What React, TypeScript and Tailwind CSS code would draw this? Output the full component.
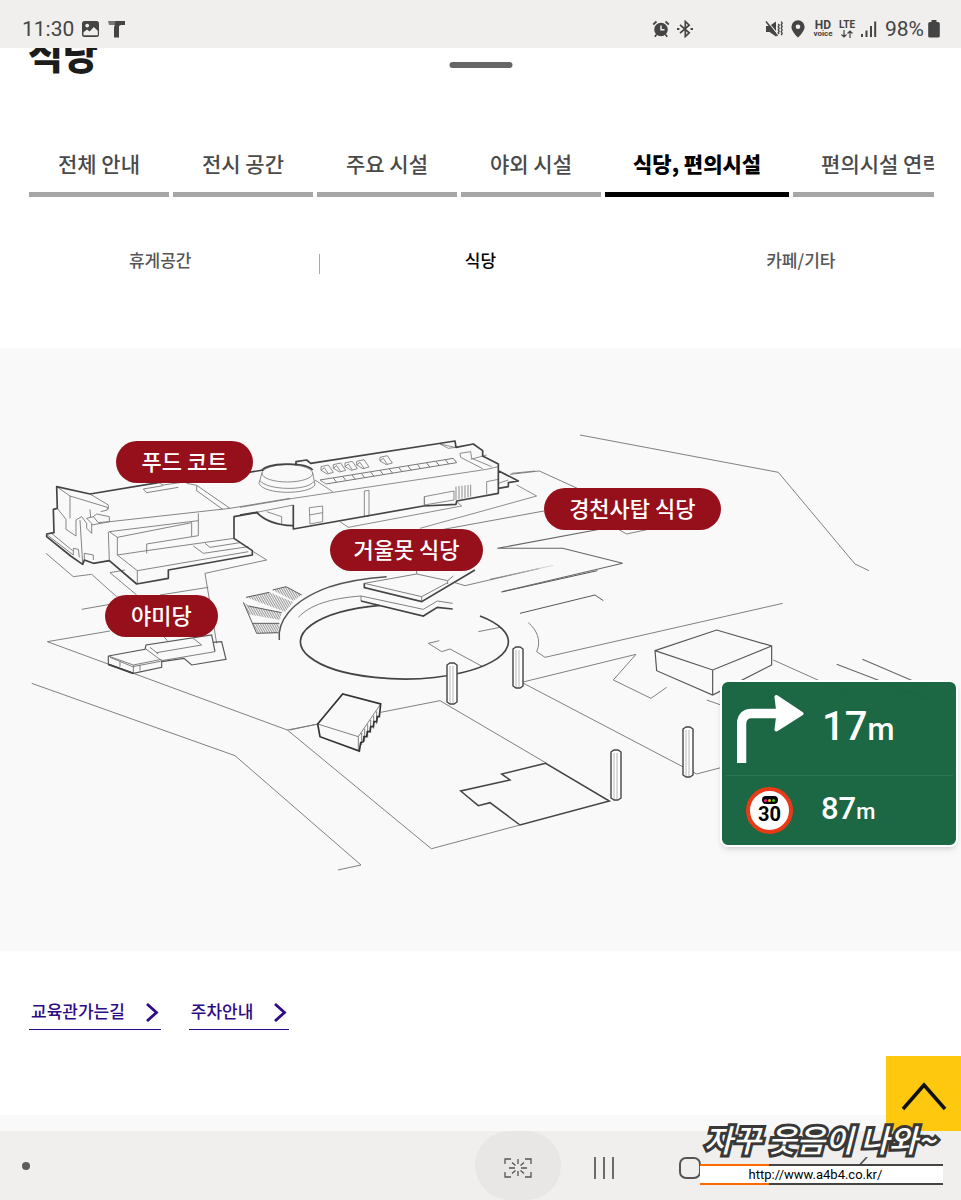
import React, { useState } from "react";
import clsx from "clsx";

const tabs = ["전체 안내", "전시 공간", "주요 시설", "야외 시설", "식당, 편의시설", "편의시설 연락처"];
const subTabs = ["휴게공간", "식당", "카페/기타"];

const places = [
  { name: "푸드 코트", spot: "left-[12.1%] top-[15.4%] w-[14.2%]" },
  { name: "경천사탑 식당", spot: "left-[56.6%] top-[23.2%] w-[18.4%]" },
  { name: "거울못 식당", spot: "left-[34.3%] top-[30%] w-[16%]" },
  { name: "야미당", spot: "left-[10.9%] top-[40.9%] w-[11.8%]" },
];

const skylights = [
  [243, 140],
  [280, 134],
  [315, 129],
  [350, 124],
  [420, 112],
];

const StatusBar = () => (
  <header className="flex h-12 items-center justify-between bg-[#f0efed] pl-[22px] pr-[21px] pt-[10px] text-[#444] font-[Roboto,sans-serif]">
    <div className="flex items-center">
      <span className="text-[21px] leading-6">11:30</span>
      <svg className="ml-2 size-[18px]" viewBox="0 0 18 18" aria-hidden="true">
        <rect x="0" y="1" width="17" height="16" rx="2.5" fill="#444" />
        <circle cx="5.200" cy="5.600" r="1.900" fill="#f0efed" />
        <path d="M1.500 15.200v-3l3.500-2.600 2.600 2 4.200-4.600 4 3.800v4.400z" fill="#f0efed" />
      </svg>
      <svg className="ml-2 h-[18px] w-[18px]" viewBox="0 0 18 18" aria-hidden="true">
        <path d="M0 1h17v4h-3.500c-1.700 0-2.500 .8-2.500 2.300V17.500H6V7.800c0-1.100 .3-2 1-2.800H1z" fill="#444" />
        <path d="M0 1h7.500l-1 4H0z" fill="#f0efed" opacity=".3" />
      </svg>
    </div>
    <div className="flex items-center">
      <svg className="size-[18px]" viewBox="0 0 18 18" aria-hidden="true">
        <circle cx="9" cy="9.500" r="6.800" fill="#444" />
        <path d="M1.200 4.500 4.500 1.500M16.800 4.500 13.500 1.500M4.500 14.500 2.800 16.700M13.500 14.500l1.700 2.200" stroke="#444" strokeWidth="1.700" />
        <path d="M9 5.500v4.300h3.500" stroke="#f0efed" strokeWidth="1.500" fill="none" />
      </svg>
      <svg className="ml-[6px] size-[18px]" viewBox="0 0 18 18" fill="none" stroke="#444" strokeWidth="1.700" aria-hidden="true">
        <path d="M4 4.800l9.200 8L9.300 16.500V1.500l3.900 3.700-9.200 8" />
        <path d="M1 9h2.400M14.600 9H17" strokeWidth="2.200" />
      </svg>
      <svg className="ml-[71px] h-[18px] w-[18px]" viewBox="0 0 18 18" aria-hidden="true">
        <path d="M1 6h3.500L11 1.500v15L4.500 12H1z" fill="#444" />
        <path d="M1.800 .8 13 14.500" stroke="#f0efed" strokeWidth="1.300" />
        <path d="M1 1.500 12.500 16" stroke="#444" strokeWidth="1.500" />
        <path d="M13.200 4l1 1.300-1 1.500 1 1.500-1 1.500 1 1.500-1 1.500 1 1.200M16.200 1.500l1 1.700-1 1.700 1 1.700-1 1.700 1 1.700-1 1.700 1 1.700-1 1.700" stroke="#444" strokeWidth="1.300" fill="none" />
      </svg>
      <svg className="ml-2 h-[18px] w-[14px]" viewBox="0 0 14 18" aria-hidden="true">
        <path d="M7 .3a6.600 6.600 0 0 0-6.600 6.600C.4 11.200 7 17.500 7 17.500s6.600-6.300 6.600-10.600A6.600 6.600 0 0 0 7 .3z" fill="#444" />
        <circle cx="7" cy="6.800" r="2.300" fill="#f0efed" />
      </svg>
      <span className="ml-2 flex w-5 flex-col items-center font-bold">
        <span className="text-[12px] leading-[10px]">HD</span>
        <span className="text-[8px] leading-[8px]">voice</span>
      </span>
      <span className="ml-1 flex w-5 flex-col items-center">
        <span className="text-[10px] font-bold leading-[10px]">LTE</span>
        <svg className="h-2 w-3" viewBox="0 0 12 8" fill="none" stroke="#444" strokeWidth="1.200" aria-hidden="true">
          <path d="M3 0v7M.5 4.500 3 7l2.500-2.500M9 8V1M6.500 3.500 9 1l2.500 2.500" />
        </svg>
      </span>
      <svg className="ml-1 h-[18px] w-4" viewBox="0 0 16 18" fill="#444" aria-hidden="true">
        <path d="M0 14h2v3H0zM4.500 10.500h2V17h-2zM9 6h2v11H9zM13.200 1.500h2V17h-2z" />
      </svg>
      <span className="ml-2 text-[21px] leading-6">98%</span>
      <svg className="ml-1 h-[18px] w-3" viewBox="0 0 12 18" fill="#444" aria-hidden="true">
        <path d="M3.500 0h5v2H10a1.800 1.800 0 0 1 1.800 1.800v11.700A1.800 1.800 0 0 1 10 17.500H2A1.800 1.800 0 0 1 .2 15.500V3.800A1.800 1.800 0 0 1 2 2h1.500z" />
      </svg>
    </div>
  </header>
);

const Pillar = ({ x, y, height }: { x: number; y: number; height: number }) => (
  <g>
    <path d={`M${x} ${y + 2}l3-2h4l3 2v${height - 3}l-3 2h-4l-3-2z`} strokeWidth="1.400" fill="#fff" />
    <path d={`M${x + 6} ${y + 3}v${height - 3}M${x + 3} ${y + 3}v${height - 3}`} stroke="#999" strokeWidth=".7" />
  </g>
);

const MuseumMap = () => (
  <svg className="block w-full" viewBox="0 348 961 603" fill="none" stroke="#666" strokeWidth="1" role="img" aria-label="박물관 지도">
    <defs>
      <pattern id="hatch" width="2" height="8" patternUnits="userSpaceOnUse" patternTransform="scale(3) rotate(-30)">
        <path d="M0 0v8" stroke="#555" strokeWidth="1.200" />
      </pattern>
      <linearGradient id="fade" x1="0" x2="1">
        <stop offset="0" stopColor="#777" />
        <stop offset="1" stopColor="#ddd" />
      </linearGradient>
    </defs>

    {/* main hall, west wing */}
    <g transform="translate(30 420) scale(.33333)" strokeWidth="2.700" stroke="#777">
      <path d="M80 200 120 228V295M120 228 232 262V270L212 275M180 222 235 255V268M180 268 182 292M82 265 108 298V328L138 348V300L155 290 170 310V325L185 340V310L170 295 190 290M190 290 200 282 238 290V305L205 308zM150 300 158 430M185 315 240 305" />
      <path d="M52 345 130 405M62 338 128 392M130 405V385L145 388 148 412M163 420V400L190 405V420" />
      <path d="M240 305 600 265 780 235M340 207 350 218 445 202M340 207 400 197M470 190 500 196 600 265M500 196V212L578 268M385 188 400 195 470 185" />
      <path d="M238 335 505 302M238 335 262 352 485 308V350M262 352V405L350 392M262 405 322 452 655 395M322 452V490M235 335 238 422M350 372V400M350 372 505 347V280M350 392 612 355M490 378 520 400 655 380M525 370 540 382 630 368" />
      <path d="M48 400 130 470 185 463 260 530M320 525 240 458 285 450M390 525 535 502M710 420 525 460 560 670M670 395 710 420" />
      <path d="M685 277 612 290V355L667 392V405L415 450V475L320 492 238 422 190 430 163 420 158 433 122 408 50 350V342L72 338 70 268 82 265 80 200 180 222 385 188M620 163 700 150" stroke="#444" strokeWidth="5" strokeLinejoin="round" />
    </g>

    {/* main hall, east wing and the round hall */}
    <g transform="translate(240 420) scale(.33333)" strokeWidth="2.500" stroke="#777">
      <path d="M0 262 160 235 740 148 775 140M160 255V320M50 277 160 255M80 275 125 290V312M208 263 248 258V305L210 312zM208 285 248 278M373 213 387 211V288L373 290zM225 180 278 215M240 180 258 192" />
      <path d="M240 180 640 115 650 128 258 192M280 174 290 187M308 169 318 182M336 165 346 178M364 160 374 173M392 156 402 169M420 151 430 164M448 147 458 160M476 142 486 155M504 138 514 151M532 133 542 146M560 129 570 142M588 124 598 137M616 119 626 132" strokeWidth="3" />
      {skylights.map(([x, y]) => (
        <path key={x} d={`M${x} ${y}l22-5 15 22-18 5-19-11zM${x} ${y + 11}l10-8 12 18`} />
      ))}
      <path d="M600 72 645 82M600 72 625 85 648 82M660 100 692 95 695 115 755 140M660 100 662 112 728 146M692 118 740 105M553 230 642 213V240L553 255zM553 230V255M648 200V240M657 198V238M666 197V236M675 196V234M684 195V232M692 194V230M740 223V185L775 178" />
      <path d="M775 190 805 180M815 160 885 153M830 195 890 228 540 325M300 305 325 322 665 258 650 245" />
      <path d="M66 158 57 190C70 225 205 225 225 195L218 158M60 182C80 210 200 215 222 184" />
      <ellipse cx="142" cy="160" rx="76" ry="26" />
      <path d="M65 152C80 128 195 124 218 150M168 137V125L200 120 212 130 645 63 648 82 700 72 728 92V108L775 132V220L650 243 648 253 550 258 160 327V255M0 285 50 277Q85 314 158 317M775 152 835 183 805 188V200L775 205" stroke="#444" strokeWidth="5" strokeLinejoin="round" />
    </g>

    {/* garden steps, south-west buildings and roads */}
    <g transform="translate(30 570) scale(.33333)" strokeWidth="2.800" stroke="#777">
      <path d="M155 118 240 103M240 183 52 215 772 480 1205 837M772 480 860 463M5 340 615 557 993 885 924 900" />
      <path d="M728 60 768 50 815 75 790 92zM648 82 718 67 790 97 765 125zM640 97 660 108 755 128 750 150 655 133zM668 160H748L745 190H680z" fill="url(#hatch)" stroke="none" />
      <path d="M728 60 768 50 815 75M648 82 718 67M640 97 680 190 745 188M668 160H748M655 108 755 128" stroke="#555" />
      <path d="M235 258 310 285 395 268M310 285V310M330 284V302M270 275V290M240 262 308 290 392 274M380 248 515 225 490 205M345 235 395 272M360 232 385 252M395 272 555 245M400 198 412 212" />
      <path d="M235 258V283L310 310 395 292V272M235 258 345 238 348 225 545 195 555 245M548 217 575 215 588 268 485 285 462 265 395 275" stroke="#555" strokeWidth="3.500" />
      <path d="M235 283 310 310" stroke="#444" strokeWidth="6" />
    </g>

    {/* mirror pond, pavilion and kiosk */}
    <g transform="translate(290 570) scale(.33333)" strokeWidth="2.800" stroke="#777">
      <path d="M25 142C60 105 120 85 213 78M213 93V78L400 118 442 93 488 100M565 185 630 172M448 212 415 220 455 245 480 237 578 290" />
      <path d="M223 40 395 80 473 38M223 40 380 12M395 80V93M380 0V12L473 32 490 18M473 32V42M495 38 525 47 750 -5" />
      <path d="M635 66 922 2M690 130 915 75 940 92" stroke="#555" strokeWidth="3" />
      <path d="M715 158C740 180 755 210 740 245L765 262 1478 100M695 337 1038 253 970 330 1083 385 1130 352M695 337 1220 612 1300 591M0 480 83 462M272 427 450 392 770 580" />
      <path d="M-32 210C-38 160-5 95 120 50C175 32 235 24 290 20" stroke="#555" strokeWidth="4.500" />
      <path d="M270 106A312 112 0 1 0 570 138M213 93 400 138 442 112 488 117M223 40V53L395 95 555 0" stroke="#444" strokeWidth="5" />
      <path d="M83 462 205 500 272 402M205 500V540M215 488V525M224 476V514M233 463V502M242 450V488M251 437V476M260 424V462" />
      <path d="M83 462 158 372 272 402 268 440 262 440 260 455 252 455 250 470 242 470 240 485 232 485 230 500 222 500 220 515 212 518 208 543 90 500z" stroke="#333" strokeWidth="5" />
    </g>

    {/* open theatre, lower right */}
    <g transform="translate(400 700) scale(.33333)" stroke="#444" strokeWidth="4.500">
      <path d="M437 190 305 222 330 240 182 273 235 317 270 308 360 375 628 303z" />
      <path d="M95 446 360 375M920 0 960 14" stroke="#777" strokeWidth="2.800" />
    </g>

    {/* eastern grounds */}
    <g transform="translate(490 420) scale(.33333)" strokeWidth="2.800">
      <path d="M270 45 865 157 1095 432 1137 452M60 163 148 153 262 205M-150 330 162 273M385 328 410 342 475 328M850 720 1072 820" stroke="#777" />
      <path d="M345 325 22 385H218L398 430 35 515M1040 733 1320 840M1117 718 1310 800" strokeWidth="3.200" />
      <path d="M0 478 190 436" stroke="url(#fade)" />
      <path d="M495 692 680 630 845 678V735L668 825 500 752zL668 750 845 678M668 750V825" stroke="#555" strokeWidth="3.500" />
    </g>

    <g stroke="#444">
      <Pillar x={447} y={663} height={40} />
      <Pillar x={513} y={647} height={40} />
      <Pillar x={611} y={750} height={49} />
      <Pillar x={683} y={727} height={49} />
    </g>
  </svg>
);

const DrivingPanel = () => (
  <aside className="absolute right-[3px] top-[632px] w-[238px] rounded-lg border-2 border-white bg-[#176440]/98 px-[3px] font-medium text-white shadow-md font-[Roboto,sans-serif]">
    <div className="flex h-[94px] items-center border-b border-[#2c7654] pl-3">
      <svg className="h-[70px] w-[68px]" viewBox="0 0 68 70" aria-hidden="true">
        <path d="M4.500 69V30c0-7 4-10.500 10-10.500H46" fill="none" stroke="#fff" strokeWidth="9.500" />
        <path d="M37.500 3.500c-.5-2 1.500-3.200 3.200-2L65.500 18c1.500 1 1.500 2.200 0 3.200L40.700 37c-1.700 1.200-3.700 0-3.200-2L39.500 19.500z" fill="#fff" />
      </svg>
      <p className="ml-[17px] text-[40px] leading-[56px]">
        17<span className="text-[31px]">m</span>
      </p>
    </div>
    <div className="flex h-[69px] items-center pl-[21px]">
      <div className="flex size-[47px] flex-col items-center rounded-full border-4 border-[#e73a17] bg-white pt-[5px] text-black">
        <span className="flex h-2 w-4 items-center justify-center gap-px rounded-full bg-black">
          <i className="size-[3px] rounded-full bg-[#ff1c9b]" />
          <i className="size-[3px] rounded-full bg-[#ffc400]" />
          <i className="size-[3px] rounded-full bg-[#2fd043]" />
        </span>
        <span className="text-[20px] font-bold leading-[20px]">30</span>
      </div>
      <p className="ml-[28px] text-[31px] leading-[40px]">
        87<span className="text-[22px]">m</span>
      </p>
    </div>
  </aside>
);

const MoreLink = ({ label }: { label: string }) => (
  <a href="#" className="flex h-9 items-center border-b border-[#2d0a86] px-[2px] pb-[2px] text-[17px] font-medium text-[#2d0a86]">
    {label}
    <svg className="ml-5 mt-[2px] h-5 w-[14px]" viewBox="0 0 14 20" fill="none" stroke="#2d0a86" strokeWidth="2.800" aria-hidden="true">
      <path d="M2 2l9.500 8.500L2 19" />
    </svg>
  </a>
);

const NavigationBar = () => (
  <footer className="flex h-[69px] items-center justify-between bg-[#f0efed] pl-[22px] pr-[56px] text-[#555]">
    <span className="size-2 rounded-full bg-[#5c5c5c]" />
    <div className="flex h-full">
      <button aria-label="캡처" className="flex h-full w-[86px] items-center justify-center rounded-full bg-[#e8e7e5]">
        <svg className="mt-1 h-5 w-7" viewBox="0 0 28 20" fill="none" stroke="currentColor" strokeWidth="1.300">
          <path d="M1 6V1h6M21 1h6v5M27 14v5h-6M7 19H1v-5M14 1v5M14 13v5M5 10h6M17 10h6M8 4.500l3.500 3M20 4.500l-3.500 3M8 15.500l3.500-3M20 15.500l-3.500-3" />
        </svg>
      </button>
      <button aria-label="최근 앱" className="flex w-[86px] items-center justify-center">
        <svg className="mt-1 h-[22px] w-5" viewBox="0 0 20 22" stroke="currentColor" strokeWidth="1.700">
          <path d="M1 0v22M10 0v22M19 0v22" />
        </svg>
      </button>
      <button aria-label="홈" className="flex w-[86px] items-center justify-center">
        <span className="mt-1 size-[22px] rounded-[7px] border-2 border-[#555]" />
      </button>
      <button aria-label="뒤로" className="ml-[86px] flex w-[86px] items-center justify-center">
        <svg className="mt-1 h-[22px] w-3" viewBox="0 0 12 22" fill="none" stroke="currentColor" strokeWidth="1.700">
          <path d="M11 0 1 11l10 11" />
        </svg>
      </button>
    </div>
  </footer>
);

const App = () => {
  const [activeTab, setActiveTab] = useState(4);
  const [activeSub, setActiveSub] = useState(1);

  return (
    <div className="relative flex min-h-screen flex-col overflow-hidden bg-white font-['Noto_Sans_CJK_KR',sans-serif]">
      <StatusBar />

      <main className="relative flex-1">
        <div className="relative h-[92px] overflow-hidden">
          <h1 className="-mt-[23px] ml-7 text-[38px] font-black leading-[56px] text-[#1c1c1c]">식당</h1>
          <div className="absolute left-1/2 top-[14px] h-[6px] w-[63px] -translate-x-1/2 rounded-full bg-[#666]" />
        </div>

        <nav className="ml-[29px] mr-[27px] flex gap-1 overflow-hidden">
          {tabs.map((tab, index) => (
            <button
              key={tab}
              onClick={() => setActiveTab(index)}
              className={clsx(
                "h-[57px] min-w-[140px] shrink-0 border-b-[5px] px-7 pb-1 text-[21px]",
                activeTab === index ? "border-black font-black text-black" : "border-[#a6a6a6] font-medium text-[#4a4a4a]"
              )}
            >
              {tab}
            </button>
          ))}
        </nav>

        <div className="flex h-[151px] pt-[47px]">
          {subTabs.map((tab, index) => (
            <button
              key={tab}
              onClick={() => setActiveSub(index)}
              className={clsx(
                "relative h-8 flex-1 text-[17px] font-medium",
                activeSub === index ? "text-black" : "text-[#555]"
              )}
            >
              {tab}
              {index === 0 && <span className="absolute right-0 top-[10px] h-5 w-px bg-[#aaa]" />}
            </button>
          ))}
        </div>

        <section className="relative bg-[#f9f9f9]">
          <MuseumMap />
          {places.map((place) => (
            <span
              key={place.name}
              className={clsx(
                "absolute flex h-[42px] items-center justify-center whitespace-nowrap rounded-full bg-[#96101c] pb-[2px] text-[22px] font-medium text-white",
                place.spot
              )}
            >
              {place.name}
            </span>
          ))}
        </section>

        <div className="flex h-[164px] gap-7 px-[29px] pt-[43px]">
          <MoreLink label="교육관가는길" />
          <MoreLink label="주차안내" />
        </div>
        <div className="h-4 bg-[#f9f9f9]" />

        <DrivingPanel />

        <button aria-label="맨 위로" className="absolute bottom-0 right-0 flex size-[75px] items-center justify-center bg-[#fec80e]">
          <svg className="mt-1 h-[30px] w-[46px]" viewBox="0 0 46 30" fill="none" stroke="#111" strokeWidth="3.500">
            <path d="M2 28 23 4l21 24" />
          </svg>
        </button>
      </main>

      <NavigationBar />

      <div className="absolute bottom-[15px] right-[18px] w-[243px]">
        <p className="whitespace-nowrap pb-[3px] pl-1 text-[31px] font-medium italic leading-[45px] text-white [-webkit-text-stroke:6px_#383838] [paint-order:stroke_fill] [stroke-linejoin:round]">
          자꾸 웃음이 나와~
        </p>
        <div className="flex h-[2px] bg-[#444]">
          <span className="w-[69px] bg-[#ff6a00]" />
        </div>
        <a href="http://www.a4b4.co.kr/" className="block bg-white pr-3 text-center text-[13px] leading-[17px] text-black font-[Roboto,sans-serif]">
          http://www.a4b4.co.kr/
        </a>
        <div className="flex h-[2px] bg-[#444]">
          <span className="w-[69px] bg-[#ff6a00]" />
        </div>
      </div>
    </div>
  );
};

export default App;
